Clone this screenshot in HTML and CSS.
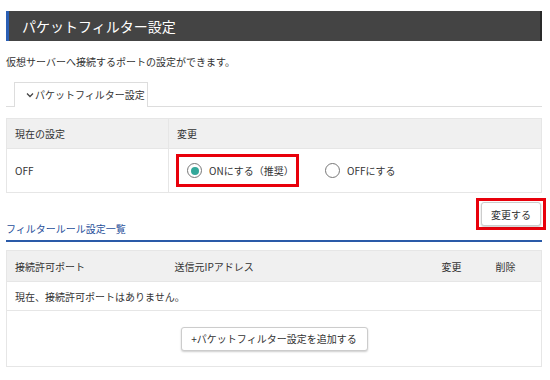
FILE: index.html
```html
<!DOCTYPE html>
<html lang="ja">
<head>
<meta charset="utf-8">
<link rel="stylesheet" href="styles.css">
</head>
<body>
<div class="page">
  <h1 class="title">パケットフィルター設定</h1>
  <p class="desc">仮想サーバーへ接続するポートの設定ができます。</p>
  <div class="tabs">
    <div class="tab-gap"></div>
    <div class="tab"><svg class="chev" width="8" height="6" viewBox="0 0 8 6"><polyline points="1,1.5 4,4.5 7,1.5" fill="none" stroke="#444" stroke-width="1.3"/></svg>パケットフィルター設定</div>
    <div class="tab-rest"></div>
  </div>
  <table class="tbl tbl1">
    <tr class="head"><th class="c1">現在の設定</th><th>変更</th></tr>
    <tr class="body">
      <td class="c1">OFF</td>
      <td>
        <div class="radios">
          <span class="redbox">
            <span class="radio on"><span class="dot"></span></span>
            <span class="rlabel">ONにする（推奨）</span>
          </span>
          <span class="opt">
            <span class="radio"></span>
            <span class="rlabel">OFFにする</span>
          </span>
        </div>
      </td>
    </tr>
  </table>
  <div class="actions">
    <span class="redbox2"><button class="btn">変更する</button></span>
  </div>
  <h2 class="sub">フィルタールール設定一覧</h2>
  <table class="tbl tbl2">
    <tr class="head2">
      <th class="c1">接続許可ポート</th>
      <th class="c2">送信元IPアドレス</th>
      <th class="c3">変更</th>
      <th class="c4">削除</th>
    </tr>
    <tr class="empty"><td colspan="4">現在、接続許可ポートはありません。</td></tr>
    <tr class="addrow"><td colspan="4"><button class="btn add">+パケットフィルター設定を追加する</button></td></tr>
  </table>
</div>
</body>
</html>
```
FILE: styles.css
```css
* { box-sizing: border-box; }
html, body { margin: 0; padding: 0; background: #fff; }
body {
  font-family: "Noto Sans CJK JP", "Noto Sans", sans-serif;
  font-size: 10px;
  color: #333;
}
.page { padding: 11px 8px 0 6px; }
.title {
  margin: 0;
  height: 30px;
  background: #444;
  border-left: 3px solid #2b5fb4;
  border-right: 2px solid #2a2a2a;
  color: #fff;
  font-size: 14px;
  font-weight: normal;
  line-height: 30px;
  padding-left: 13px;
  white-space: nowrap;
}
.desc { margin: 0; padding-top: 13px; line-height: 16px; height: 29px; }
.tabs { display: flex; align-items: flex-end; height: 37px; }
.tab-gap { width: 8px; border-bottom: 1px solid #ddd; }
.tab {
  width: 134px;
  height: 25px;
  border: 1px solid #ddd;
  border-bottom: none;
  line-height: 24px;
  padding-left: 11px;
  white-space: nowrap;
  display: flex;
  align-items: center;
}
.chev { margin-right: 1px; }
.tab-rest { flex: 1; border-bottom: 1px solid #ddd; }
.tbl {
  width: 100%;
  border-collapse: collapse;
  border: 1px solid #e6e6e6;
}
.tbl1 { margin-top: 11px; }
.tbl th { font-weight: normal; text-align: left; }
.head th { background: #f0f0f0; height: 30px; padding: 0 0 0 8px; }
.tbl1 .c1 { width: 162px; border-right: 1px solid #e6e6e6; }
.body td { height: 44px; padding: 0 0 0 8px; border-top: 1px solid #e6e6e6; }
.body td:not(.c1) { padding-left: 7px; }
.radios { display: flex; align-items: center; }
.redbox {
  display: flex;
  align-items: center;
  border: 3px solid #e8000b;
  height: 33px;
  width: 123px;
  padding-left: 8px;
  white-space: nowrap;
}
.opt { display: flex; align-items: center; margin-left: 26px; }
.radio {
  width: 15px;
  height: 15px;
  border: 1.5px solid #777;
  border-radius: 50%;
  display: inline-flex;
  align-items: center;
  justify-content: center;
  margin-right: 7px;
  background: #fff;
  flex: none;
}
.dot { width: 8px; height: 8px; border-radius: 50%; background: #33a89a; }
.actions { display: flex; justify-content: flex-end; margin-right: -4px; margin-top: 5px; }
.redbox2 {
  border: 3px solid #e8000b;
  padding: 1px 2px;
  display: inline-flex;
}
.btn {
  font-family: "Noto Sans CJK JP", "Noto Sans", sans-serif;
  font-size: 10px;
  color: #333;
  background: #fff;
  border: 1px solid #ccc;
  border-radius: 3px;
  box-shadow: 0 1px 2px rgba(0,0,0,0.2);
  height: 24px;
  width: 60px;
  padding: 0;
}
.sub {
  margin: -9px 0 0 0;
  font-size: 10px;
  font-weight: normal;
  color: #1f4f9a;
  border-bottom: 2px solid #2a5aa8;
  line-height: 16px;
  padding-bottom: 3px;
}
.tbl2 { margin-top: 8px; }
.head2 th { background: #f0f0f0; height: 31px; padding: 0; }
.head2 .c1 { width: 168px; padding-left: 8px; }
.head2 .c2 { width: 267px; }
.head2 .c3 { width: 54px; }
.empty td { height: 29px; padding-left: 8px; border-top: 1px solid #e6e6e6; }
.addrow td { height: 56px; text-align: center; border-top: 1px solid #e6e6e6; }
.btn.add { width: 187px; height: 24px; }
```
